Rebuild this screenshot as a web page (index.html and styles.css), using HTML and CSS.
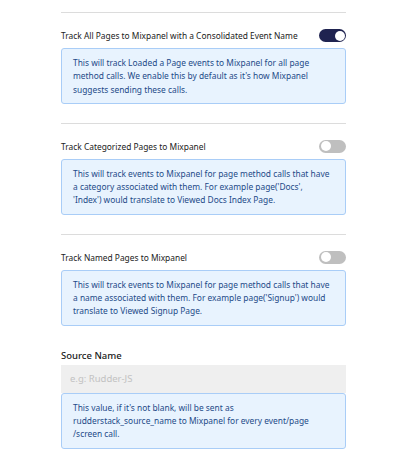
FILE: index.html
```html
<!DOCTYPE html>
<html>
<head>
<meta charset="utf-8">
<link rel="stylesheet" href="styles.css">
</head>
<body>
<div class="form">
  <hr class="divider">
  <section class="setting">
    <div class="setting-row">
      <span class="label">Track All Pages to Mixpanel with a Consolidated Event Name</span>
      <span class="toggle on"><span class="knob"></span></span>
    </div>
    <div class="note">This will track Loaded a Page events to Mixpanel for all page method calls. We enable this by default as it's how Mixpanel suggests sending these calls.</div>
  </section>
  <hr class="divider">
  <section class="setting">
    <div class="setting-row">
      <span class="label">Track Categorized Pages to Mixpanel</span>
      <span class="toggle"><span class="knob"></span></span>
    </div>
    <div class="note">This will track events to Mixpanel for page method calls that have a category associated with them. For example page('Docs', 'Index') would translate to Viewed Docs Index Page.</div>
  </section>
  <hr class="divider">
  <section class="setting">
    <div class="setting-row">
      <span class="label">Track Named Pages to Mixpanel</span>
      <span class="toggle"><span class="knob"></span></span>
    </div>
    <div class="note">This will track events to Mixpanel for page method calls that have a name associated with them. For example page('Signup') would translate to Viewed Signup Page.</div>
  </section>
  <section class="field">
    <div class="field-label">Source Name</div>
    <input class="input" type="text" placeholder="e.g: Rudder-JS">
    <div class="note">This value, if it's not blank, will be sent as rudderstack_source_name to Mixpanel for every event/page /screen call.</div>
  </section>
</div>
</body>
</html>
```
FILE: styles.css
```css
* { box-sizing: border-box; }
html, body { margin: 0; padding: 0; background: #fff; }
body { font-family: "Noto Sans", sans-serif; color: #222; }
.form { width: 285px; margin-left: 61px; padding-top: 12px; }
.divider { border: 0; height: 1px; background: #dcdcdc; margin: 0; }
.setting { padding-top: 16px; padding-bottom: 19px; }
.setting-row { display: flex; align-items: center; justify-content: space-between; height: 13px; margin-bottom: 6px; }
.label { font-size: 8.4px; color: #222; line-height: 13px; }
.toggle { width: 27px; height: 13px; border-radius: 7px; background: #bfbfbf; position: relative; flex: none; }
.toggle.on { background: #1f2350; }
.knob { position: absolute; top: 1.5px; left: 1.5px; width: 10px; height: 10px; border-radius: 50%; background: #fff; }
.toggle.on .knob { left: auto; right: 1.5px; }
.note { background: #e8f3fe; border: 1px solid #a9cdf7; border-radius: 3px; padding: 7px 14px 7px 11px; font-size: 8.4px; line-height: 13.3px; color: #244a88; }
.field { padding-top: 4px; }
.field-label { font-size: 9.5px; font-weight: 500; color: #1a1a1a; line-height: 14px; margin-bottom: 2px; }
.input { display: block; width: 100%; height: 28px; border: 0; background: #efefef; padding: 0 9px; font-family: "Noto Sans", sans-serif; font-size: 9.5px; color: #222; outline: none; }
.input::placeholder { color: #c2c2c2; }
```
